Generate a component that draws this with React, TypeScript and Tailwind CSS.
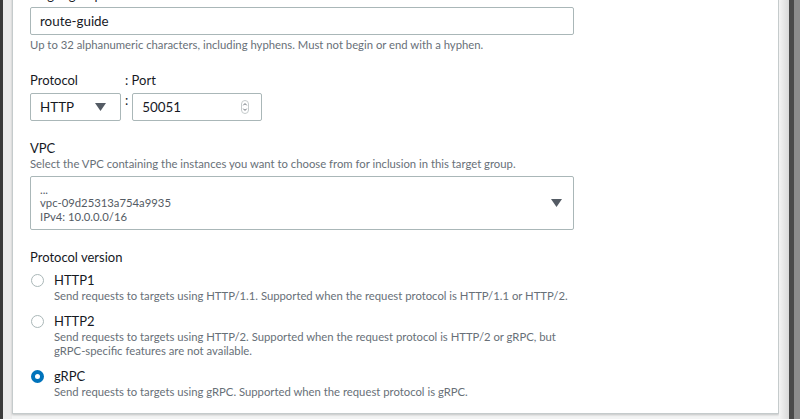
import React from 'react';

const font = { fontFamily: 'Lato, "Open Sans", Arial, sans-serif' };

const Radio = ({ checked }: { checked?: boolean }) =>
  checked ? (
    <span className="mt-[3px] block h-[13px] w-[13px] shrink-0 rounded-full border-[4px] border-[#0073bb] bg-white" />
  ) : (
    <span className="mt-[3px] block h-[13px] w-[13px] shrink-0 rounded-full border border-[#aab7b8] bg-white" />
  );

const Caret = () => (
  <svg width="11" height="8" viewBox="0 0 11 8">
    <path d="M0 0 H11 L5.5 8 Z" fill="#545b64" />
  </svg>
);

const versions = [
  {
    name: 'HTTP1',
    desc: ['Send requests to targets using HTTP/1.1. Supported when the request protocol is HTTP/1.1 or HTTP/2.'],
  },
  {
    name: 'HTTP2',
    desc: [
      'Send requests to targets using HTTP/2. Supported when the request protocol is HTTP/2 or gRPC, but',
      'gRPC-specific features are not available.',
    ],
  },
  {
    name: 'gRPC',
    desc: ['Send requests to targets using gRPC. Supported when the request protocol is gRPC.'],
    checked: true,
  },
];

export default function App() {
  return (
    <div className="flex h-[419px] w-[800px] overflow-hidden bg-[#f2f3f3] text-[#16191f]" style={font}>
      <div className="w-[3px] shrink-0 bg-[#3b3b3b]" />
      <div className="w-[9px] shrink-0 bg-[#ebebeb]" />
      <div className="flex w-[767px] shrink-0 flex-col">
        <div className="mt-[-20px] h-[434px] border border-[#c5cbcc] bg-white pl-[17px] shadow-[0_1px_2px_rgba(0,0,0,0.2)]">
          <div className="pt-[7px] text-[13px] leading-[14px] text-[#16191f]">Target group name</div>
          <div className="mt-[5px] flex h-[28px] w-[544px] items-center rounded-[2px] border border-[#aab7b8] px-[9px] text-[13.4px]">
            route-guide
          </div>
          <div className="mt-[2px] text-[11.3px] leading-[16px] text-[#687078]">
            Up to 32 alphanumeric characters, including hyphens. Must not begin or end with a hyphen.
          </div>

          <div className="mt-[18px] flex text-[13px] leading-[18px]">
            <span className="w-[95px]">Protocol</span>
            <span>: Port</span>
          </div>
          <div className="mt-[4px] flex items-start">
            <div className="flex h-[28px] w-[91px] items-center justify-between rounded-[2px] border border-[#aab7b8] pl-[9px] pr-[14px] text-[13.4px]">
              <span>HTTP</span>
              <Caret />
            </div>
            <span className="mx-[4px] mt-[-1px] text-[13px] leading-[16px]">:</span>
            <div className="flex h-[28px] w-[130px] items-center justify-between rounded-[2px] border border-[#aab7b8] pl-[9px] pr-[12px] text-[13.4px]">
              <span>50051</span>
              <svg width="8" height="14" viewBox="0 0 8 14">
                <rect x="0.5" y="0.5" width="7" height="13" rx="3.5" fill="none" stroke="#c5cbcc" />
                <path d="M2.3 5.3 L4 3.6 L5.7 5.3 M2.3 8.7 L4 10.4 L5.7 8.7" fill="none" stroke="#545b64" strokeWidth="0.9" />
              </svg>
            </div>
          </div>

          <div className="mt-[19px] text-[13px] leading-[16px]">VPC</div>
          <div className="text-[11.3px] leading-[15px] text-[#687078]">
            Select the VPC containing the instances you want to choose from for inclusion in this target group.
          </div>
          <div className="mt-[5px] flex h-[54px] w-[544px] items-center justify-between rounded-[2px] border border-[#aab7b8] pl-[9px] pr-[11px]">
            <div className="flex flex-col pt-[1px] text-[11.3px] leading-[14px] text-[#545b64]">
              <span className="leading-[12px]">...</span>
              <span>vpc-09d25313a754a9935</span>
              <span>IPv4: 10.0.0.0/16</span>
            </div>
            <Caret />
          </div>

          <div className="mt-[18px] text-[13px] leading-[18px]">Protocol version</div>
          <div className="mt-[5px] flex flex-col gap-[9px]">
            {versions.map((v) => (
              <div key={v.name} className="flex gap-[10px] pl-[1px]">
                <Radio checked={v.checked} />
                <div>
                  <div className="text-[13px] leading-[18px]">{v.name}</div>
                  {v.desc.map((d) => (
                    <div key={d} className="text-[11.3px] leading-[14px] text-[#687078]">
                      {d}
                    </div>
                  ))}
                </div>
              </div>
            ))}
          </div>
        </div>
      </div>
      <div className="w-[10px] shrink-0 bg-gradient-to-r from-[#f4f4f4] to-[#d9d9d9]" />
      <div className="w-[5px] shrink-0 bg-[#4a4a4a]" />
      <div className="w-[6px] shrink-0 bg-[#8c8c8c]" />
    </div>
  );
}
